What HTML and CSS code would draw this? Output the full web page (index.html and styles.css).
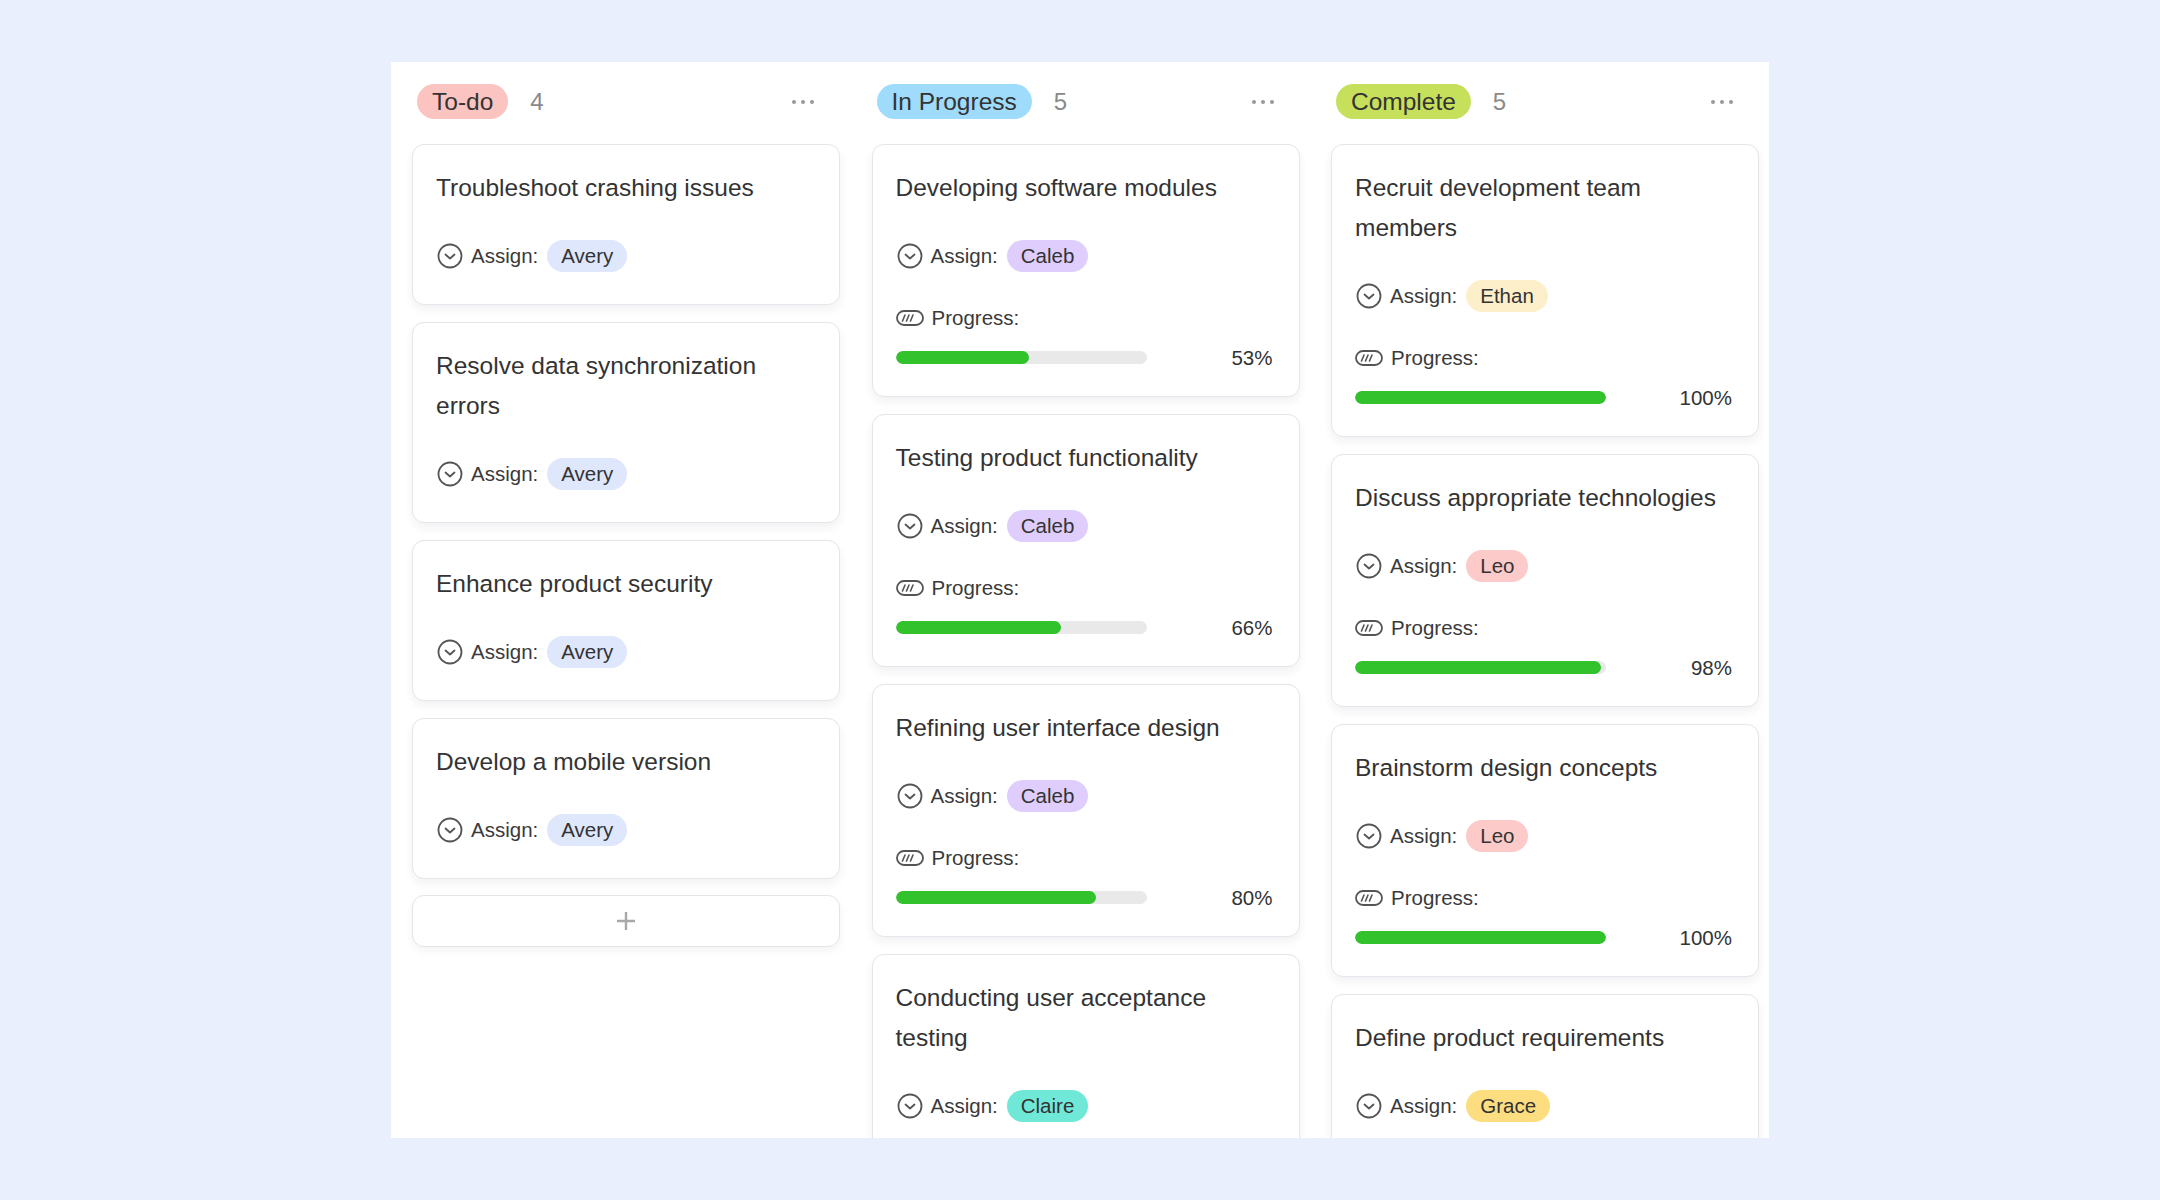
FILE: index.html
```html
<!DOCTYPE html>
<html lang="en">
<head>
<meta charset="utf-8">
<title>Kanban</title>
<link rel="stylesheet" href="styles.css">
</head>
<body>
<svg width="0" height="0" class="defs">
  <defs>
    <symbol id="i-assign" viewBox="0 0 26 26">
      <circle cx="13" cy="13" r="11.5" fill="none" stroke="#555" stroke-width="1.8"/>
      <path d="M8.5 11.5 L13 15.5 L17.5 11.5" fill="none" stroke="#555" stroke-width="1.8" stroke-linecap="round" stroke-linejoin="round"/>
    </symbol>
    <symbol id="i-progress" viewBox="0 0 28 16">
      <rect x="1" y="1" width="26" height="14" rx="7" fill="none" stroke="#555" stroke-width="1.8"/>
      <path d="M6.5 11 L9 5 M10.5 11 L13 5 M14.5 11 L17 5" fill="none" stroke="#555" stroke-width="1.6" stroke-linecap="round"/>
    </symbol>
  </defs>
</svg>
<div class="board">
  <section class="column">
    <header class="col-head">
      <span class="status todo">To-do</span><span class="count">4</span>
      <span class="more"><i></i><i></i><i></i></span>
    </header>
    <div class="cards">
      <article class="card">
        <div class="title">Troubleshoot crashing issues</div>
        <div class="row assign"><svg class="ic-a"><use href="#i-assign"/></svg><span class="label">Assign:</span><span class="person avery">Avery</span></div>
      </article>
      <article class="card">
        <div class="title">Resolve data synchronization errors</div>
        <div class="row assign"><svg class="ic-a"><use href="#i-assign"/></svg><span class="label">Assign:</span><span class="person avery">Avery</span></div>
      </article>
      <article class="card">
        <div class="title">Enhance product security</div>
        <div class="row assign"><svg class="ic-a"><use href="#i-assign"/></svg><span class="label">Assign:</span><span class="person avery">Avery</span></div>
      </article>
      <article class="card">
        <div class="title">Develop a mobile version</div>
        <div class="row assign"><svg class="ic-a"><use href="#i-assign"/></svg><span class="label">Assign:</span><span class="person avery">Avery</span></div>
      </article>
      <button class="add" type="button"><svg viewBox="0 0 22 22" class="plus"><path d="M11 2 V20 M2 11 H20" stroke="#a8a8a8" stroke-width="2.4"/></svg></button>
    </div>
  </section>

  <section class="column">
    <header class="col-head">
      <span class="status doing">In Progress</span><span class="count">5</span>
      <span class="more"><i></i><i></i><i></i></span>
    </header>
    <div class="cards">
      <article class="card">
        <div class="title">Developing software modules</div>
        <div class="row assign"><svg class="ic-a"><use href="#i-assign"/></svg><span class="label">Assign:</span><span class="person caleb">Caleb</span></div>
        <div class="row prog"><svg class="ic-p"><use href="#i-progress"/></svg><span class="label">Progress:</span></div>
        <div class="bar-row"><div class="track"><div class="fill" style="width:53%"></div></div><span class="pct">53%</span></div>
      </article>
      <article class="card">
        <div class="title">Testing product functionality</div>
        <div class="row assign"><svg class="ic-a"><use href="#i-assign"/></svg><span class="label">Assign:</span><span class="person caleb">Caleb</span></div>
        <div class="row prog"><svg class="ic-p"><use href="#i-progress"/></svg><span class="label">Progress:</span></div>
        <div class="bar-row"><div class="track"><div class="fill" style="width:66%"></div></div><span class="pct">66%</span></div>
      </article>
      <article class="card">
        <div class="title">Refining user interface design</div>
        <div class="row assign"><svg class="ic-a"><use href="#i-assign"/></svg><span class="label">Assign:</span><span class="person caleb">Caleb</span></div>
        <div class="row prog"><svg class="ic-p"><use href="#i-progress"/></svg><span class="label">Progress:</span></div>
        <div class="bar-row"><div class="track"><div class="fill" style="width:80%"></div></div><span class="pct">80%</span></div>
      </article>
      <article class="card">
        <div class="title">Conducting user acceptance testing</div>
        <div class="row assign"><svg class="ic-a"><use href="#i-assign"/></svg><span class="label">Assign:</span><span class="person claire">Claire</span></div>
      </article>
    </div>
  </section>

  <section class="column">
    <header class="col-head">
      <span class="status done">Complete</span><span class="count">5</span>
      <span class="more"><i></i><i></i><i></i></span>
    </header>
    <div class="cards">
      <article class="card">
        <div class="title">Recruit development team members</div>
        <div class="row assign"><svg class="ic-a"><use href="#i-assign"/></svg><span class="label">Assign:</span><span class="person ethan">Ethan</span></div>
        <div class="row prog"><svg class="ic-p"><use href="#i-progress"/></svg><span class="label">Progress:</span></div>
        <div class="bar-row"><div class="track"><div class="fill" style="width:100%"></div></div><span class="pct">100%</span></div>
      </article>
      <article class="card">
        <div class="title">Discuss appropriate technologies</div>
        <div class="row assign"><svg class="ic-a"><use href="#i-assign"/></svg><span class="label">Assign:</span><span class="person leo">Leo</span></div>
        <div class="row prog"><svg class="ic-p"><use href="#i-progress"/></svg><span class="label">Progress:</span></div>
        <div class="bar-row"><div class="track"><div class="fill" style="width:98%"></div></div><span class="pct">98%</span></div>
      </article>
      <article class="card">
        <div class="title">Brainstorm design concepts</div>
        <div class="row assign"><svg class="ic-a"><use href="#i-assign"/></svg><span class="label">Assign:</span><span class="person leo">Leo</span></div>
        <div class="row prog"><svg class="ic-p"><use href="#i-progress"/></svg><span class="label">Progress:</span></div>
        <div class="bar-row"><div class="track"><div class="fill" style="width:100%"></div></div><span class="pct">100%</span></div>
      </article>
      <article class="card">
        <div class="title">Define product requirements</div>
        <div class="row assign"><svg class="ic-a"><use href="#i-assign"/></svg><span class="label">Assign:</span><span class="person grace">Grace</span></div>
      </article>
    </div>
  </section>
</div>
</body>
</html>
```

FILE: styles.css
```css
* { box-sizing: border-box; }
html, body { margin: 0; padding: 0; }
body {
  background: #e9effd;
  font-family: "Liberation Sans", Arial, sans-serif;
  color: #333;
  height: 1200px;
  overflow: hidden;
}
.defs { position: absolute; width: 0; height: 0; }
.board {
  width: 1378px;
  height: 1076px;
  margin: 62px auto 0;
  background: #fff;
  overflow: hidden;
  display: grid;
  grid-template-columns: repeat(3, 428px);
  column-gap: 31.5px;
  padding: 22px 10px 0 21px;
  align-items: start;
}
.col-head {
  display: flex;
  align-items: center;
  height: 35px;
  padding: 0 26px 0 5px;
}
.status {
  height: 35px;
  line-height: 35px;
  border-radius: 18px;
  padding: 0 15px;
  font-size: 24.5px;
  color: #333;
}
.todo { background: #fcc4c1; }
.doing { background: #9fdcfc; }
.done { background: #c7e05c; }
.count {
  margin-left: 22px;
  font-size: 24px;
  color: #8a8a8a;
}
.more {
  margin-left: auto;
  display: flex;
  gap: 5px;
  align-items: center;
}
.more i {
  width: 4px;
  height: 4px;
  border-radius: 50%;
  background: #999;
}
.cards {
  margin-top: 25px;
  display: flex;
  flex-direction: column;
  gap: 17px;
}
.card {
  background: #fff;
  border: 1px solid #e5e5ea;
  border-radius: 12px;
  box-shadow: 0 5px 10px rgba(30, 30, 60, 0.06);
  padding: 23px 23px 32px;
}
.title {
  font-size: 24.5px;
  line-height: 40px;
  max-width: 368px;
  color: #333;
}
.row {
  display: flex;
  align-items: center;
  height: 32px;
}
.assign { margin-top: 32px; }
.prog { margin-top: 30px; }
.ic-a { width: 26px; height: 26px; margin-left: 1px; flex: none; }
.ic-p { width: 28px; height: 16px; flex: none; }
.label {
  font-size: 20.5px;
  color: #3a3a3a;
  margin-left: 8px;
}
.person {
  margin-left: 9px;
  height: 32px;
  line-height: 32px;
  padding: 0 14px;
  border-radius: 16px;
  font-size: 20.5px;
  color: #333;
}
.avery { background: #dfe7fc; }
.caleb { background: #dfcefd; }
.claire { background: #70e8d7; }
.ethan { background: #fcefc9; }
.leo { background: #fdcaca; }
.grace { background: #fcde80; }
.bar-row {
  margin-top: 17px;
  height: 13px;
  display: flex;
  align-items: center;
  justify-content: space-between;
}
.track {
  width: 251px;
  height: 13px;
  border-radius: 7px;
  background: #e9e9e9;
  overflow: hidden;
}
.fill {
  height: 100%;
  background: #32c22b;
  border-radius: 7px;
}
.pct {
  font-size: 20.5px;
  line-height: 13px;
  color: #333;
  margin-right: 3px;
}
.add {
  height: 52px;
  width: 100%;
  background: #fff;
  border: 1px solid #e3e3ea;
  border-radius: 12px;
  box-shadow: 0 4px 8px rgba(30, 30, 60, 0.05);
  display: flex;
  align-items: center;
  justify-content: center;
  padding: 0;
  margin-top: -1px;
}
.plus { width: 22px; height: 22px; }
```
